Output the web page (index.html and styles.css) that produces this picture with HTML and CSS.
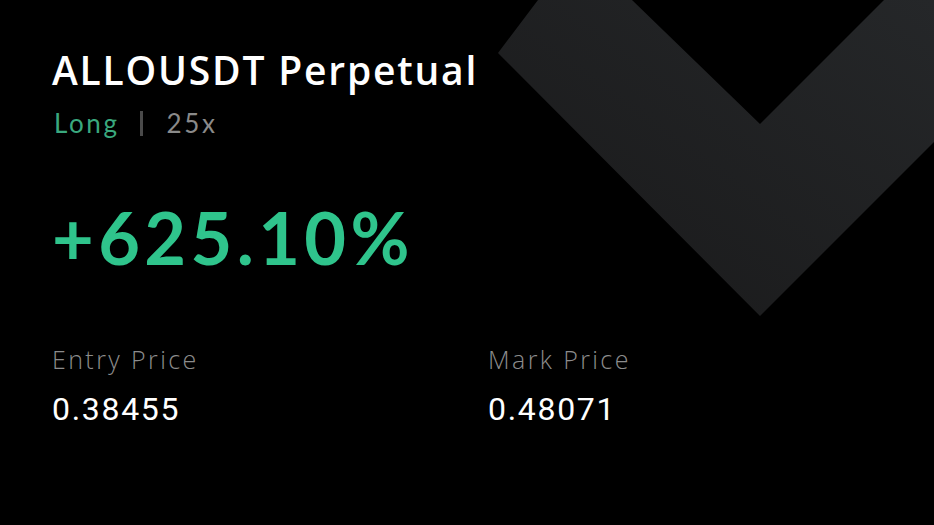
FILE: index.html
```html
<!DOCTYPE html>
<html lang="en">
<head>
    <meta charset="UTF-8">
    <title>ALLOUSDT Perpetual</title>
    <link rel="stylesheet" href="styles.css">
</head>
<body>
<div id="card">
    <svg class="mark" width="934" height="525" viewBox="0 0 934 525">
        <defs>
            <linearGradient id="shade" x1="0" y1="1" x2="1" y2="0">
                <stop offset="0" stop-color="#19191a"/>
                <stop offset="1" stop-color="#252729"/>
            </linearGradient>
        </defs>
        <polygon fill="url(#shade)" points="498,53 538,0 632,0 760,124 884,0 934,0 934,142 760,316"/>
    </svg>

    <div class="content">
        <h1 class="pair">ALLOUSDT Perpetual</h1>
        <p class="side">
            <span class="long">Long</span>
            <span class="sep"></span>
            <span class="lev">25x</span>
        </p>

        <p class="roe">+625.10%</p>

        <div class="prices">
            <div>
                <p class="label">Entry Price</p>
                <p class="value">0.38455</p>
            </div>
            <div>
                <p class="label">Mark Price</p>
                <p class="value">0.48071</p>
            </div>
        </div>
    </div>
</div>
</body>
</html>
```

FILE: styles.css
```css
* {
    margin: 0;
    padding: 0;
}

body {
    background: #000;
}

#card {
    position: relative;
    width: 934px;
    height: 525px;
    overflow: hidden;
    background: #000;
}

#card .mark {
    position: absolute;
    left: 0;
    top: 0;
}

.content {
    position: relative;
    padding: 46px 0 0 52px;
    font-family: Lato, "Open Sans", sans-serif;
}

.pair {
    font-family: "Open Sans", sans-serif;
    font-size: 39px;
    font-weight: 600;
    letter-spacing: 1.8px;
    color: #fff;
    line-height: 48px;
}

.side {
    display: flex;
    align-items: center;
    margin-top: 14px;
    font-size: 26px;
    letter-spacing: 2.6px;
    line-height: 30px;
    padding-left: 2px;
}

.long {
    color: #3aa97e;
}

.sep {
    width: 3px;
    height: 25px;
    background: #4a4a4a;
    margin: 0 24px 0 20px;
}

.lev {
    color: #8a8a8a;
}

.roe {
    margin-top: 59px;
    font-size: 72px;
    font-weight: 700;
    letter-spacing: 4.4px;
    color: #2fc48c;
    line-height: 80px;
}

.prices {
    display: grid;
    grid-template-columns: 436px 1fr;
    margin-top: 67px;
}

.label {
    font-family: "Open Sans", sans-serif;
    font-size: 25px;
    font-weight: 300;
    letter-spacing: 2.4px;
    color: #8c8c8c;
    line-height: 30px;
}

.value {
    margin-top: 15px;
    font-family: Roboto, sans-serif;
    font-size: 32px;
    letter-spacing: 1.7px;
    color: #fff;
    line-height: 40px;
}
```
